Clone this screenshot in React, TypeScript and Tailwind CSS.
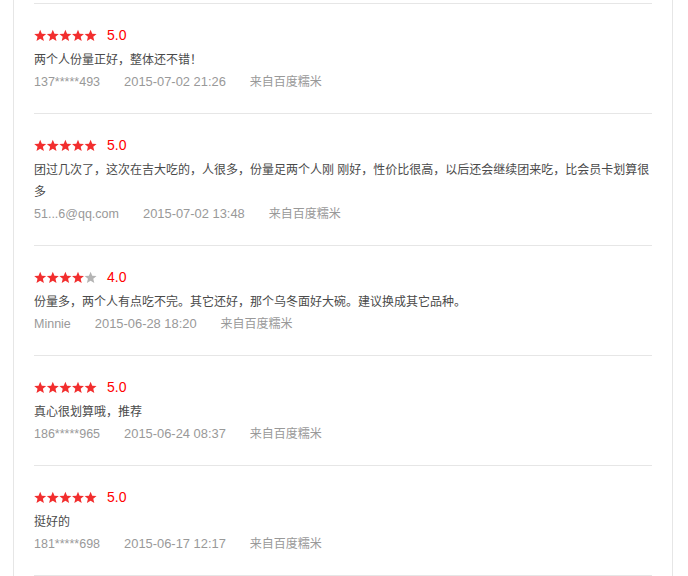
import React from "react";

type Review = { rating: number; text: string; user: string; date: string };

const reviews: Review[] = [
  { rating: 5, text: "两个人份量正好，整体还不错！", user: "137*****493", date: "2015-07-02 21:26" },
  {
    rating: 5,
    text: "团过几次了，这次在吉大吃的，人很多，份量足两个人刚 刚好，性价比很高，以后还会继续团来吃，比会员卡划算很多",
    user: "51...6@qq.com",
    date: "2015-07-02 13:48",
  },
  { rating: 4, text: "份量多，两个人有点吃不完。其它还好，那个乌冬面好大碗。建议换成其它品种。", user: "Minnie", date: "2015-06-28 18:20" },
  { rating: 5, text: "真心很划算哦，推荐", user: "186*****965", date: "2015-06-24 08:37" },
  { rating: 5, text: "挺好的", user: "181*****698", date: "2015-06-17 12:17" },
];

const starPts = (cx: number, cy: number, R: number, r: number) => {
  const pts: string[] = [];
  for (let i = 0; i < 10; i++) {
    const rad = i % 2 === 0 ? R : r;
    const a = (Math.PI / 5) * i - Math.PI / 2;
    pts.push(`${(cx + rad * Math.cos(a)).toFixed(2)},${(cy + rad * Math.sin(a)).toFixed(2)}`);
  }
  return pts.join(" ");
};

function Stars({ n }: { n: number }) {
  return (
    <svg width="63" height="13" viewBox="0 0 63 13" className="block">
      {[0, 1, 2, 3, 4].map((i) => (
        <polygon
          key={i}
          points={starPts(6.2 + i * 12.6, 7, 6.3, 2.8)}
          fill={i < n ? "#f22e2e" : "#b4b4b4"}
        />
      ))}
    </svg>
  );
}

export default function App() {
  return (
    <div className="h-[576px] w-[688px] overflow-hidden bg-white" style={{ fontFamily: '"Liberation Sans", "Noto Sans CJK SC", sans-serif' }}>
      <div className="ml-[13px] h-[576px] w-[660px] border-x border-[#e6e6e6] px-[20px] pt-[3px]">
        {reviews.map((r, i) => (
          <div key={i} className="border-t border-[#e6e6e6] pt-[18px] pb-[20px] last:border-b">
            <div className="flex h-[27px] items-center pb-px">
              <Stars n={r.rating} />
              <span className="ml-[10px] text-[14px] leading-[26px] text-[#ff0000]">{r.rating}.0</span>
            </div>
            <div className="text-[12px] leading-[22px] text-[#4a4a4a]">{r.text}</div>
            <div className="flex text-[12.5px] leading-[22px] text-[#999]">
              <span className="mr-[24px]">{r.user}</span>
              <span className="mr-[24px] text-[12.9px]">{r.date}</span>
              <span className="text-[12px]">来自百度糯米</span>
            </div>
          </div>
        ))}
      </div>
    </div>
  );
}
